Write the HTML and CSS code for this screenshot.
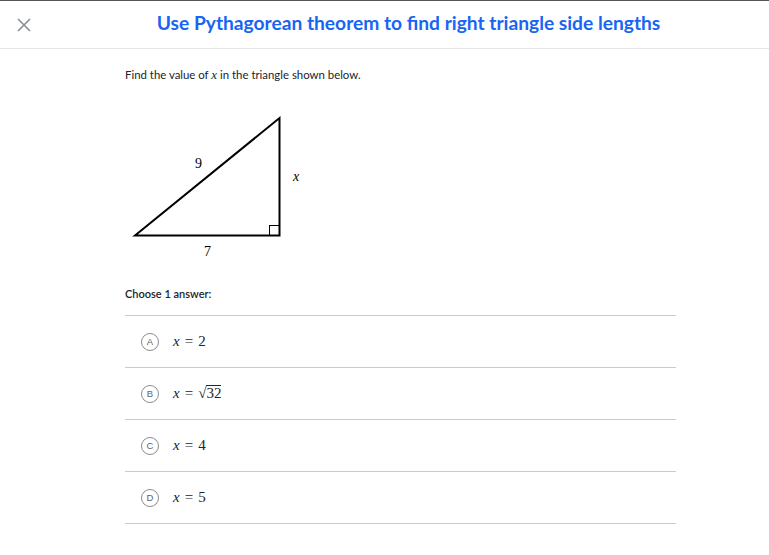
FILE: index.html
```html
<!DOCTYPE html>
<html>
<head>
<meta charset="utf-8">
<link rel="stylesheet" href="styles.css">
</head>
<body>
<div class="page">
  <header class="header">
    <button class="close" aria-label="Close">
      <svg width="14" height="14" viewBox="0 0 14 14"><path d="M1 1 L13 13 M13 1 L1 13" stroke="#888d93" stroke-width="1.6" fill="none"/></svg>
    </button>
    <h1 class="title">Use Pythagorean theorem to find right triangle side lengths</h1>
  </header>
  <main class="content">
    <p class="prompt">Find the value of <span class="mi">x</span> in the triangle shown below.</p>
    <div class="figure">
      <svg width="200" height="160" viewBox="0 0 200 160">
        <polygon points="10,120.5 154.5,3 154.5,120.5" fill="none" stroke="#000" stroke-width="2" stroke-linejoin="miter"/>
        <rect x="144.5" y="110.5" width="10" height="10" fill="none" stroke="#000" stroke-width="1"/>
        <text x="70" y="53" class="lbl">9</text>
        <text x="168" y="66" class="lbl it">x</text>
        <text x="79" y="141" class="lbl">7</text>
      </svg>
    </div>
    <p class="choose">Choose 1 answer:</p>
    <ul class="choices">
      <li class="choice"><span class="letter">A</span><span class="math"><span class="mi">x</span><span class="mo">=</span>2</span></li>
      <li class="choice"><span class="letter">B</span><span class="math"><span class="mi">x</span><span class="mo">=</span><span class="sqrt">√<span class="rad">32</span></span></span></li>
      <li class="choice"><span class="letter">C</span><span class="math"><span class="mi">x</span><span class="mo">=</span>4</span></li>
      <li class="choice"><span class="letter">D</span><span class="math"><span class="mi">x</span><span class="mo">=</span>5</span></li>
    </ul>
  </main>
</div>
</body>
</html>
```

FILE: styles.css
```css
* { box-sizing: border-box; }
html, body { margin: 0; padding: 0; background: #fff; }
body { font-family: Lato, "Liberation Sans", sans-serif; color: #21242c; }
.page { border-top: 1px solid #555; }
.header {
  height: 48px;
  border-bottom: 1px solid #e4e5e6;
  display: flex;
  align-items: center;
}
.close {
  border: 0; background: none; padding: 0;
  margin-left: 17px; width: 14px; height: 14px;
  display: flex; align-items: center; justify-content: center;
  flex: none;
}
.title {
  flex: 1;
  margin: 0 0 0 17px;
  text-align: center;
  font-size: 19.2px;
  font-weight: 700;
  color: #1865f2;
  white-space: nowrap;
  position: relative;
  top: -2px;
}
.content { padding: 0 0 0 125px; width: 676px; }
.prompt { margin: 19px 0 0; font-size: 11.4px; line-height: 14px; }
.mi { font-family: "Liberation Serif", serif; font-style: italic; }
.prompt .mi { font-size: 13px; }
.figure { margin-top: 33px; height: 165px; }
.figure svg { display: block; }
.lbl { font-family: "Liberation Serif", serif; font-size: 14px; fill: #000; }
.lbl.it { font-style: italic; }
.choose { margin: 7px 0 0; font-size: 11px; font-weight: 600; line-height: 14px; }
.choices { list-style: none; margin: 14px 0 0; padding: 0; border-top: 1px solid #c9cacc; }
.choice {
  height: 52px;
  border-bottom: 1px solid #c9cacc;
  display: flex;
  align-items: center;
  padding-left: 16px;
}
.letter {
  width: 18px; height: 18px;
  border: 1px solid #8a8c90;
  border-radius: 50%;
  font-size: 9.5px;
  color: #5f6267;
  display: flex; align-items: center; justify-content: center;
  font-family: "Liberation Sans", sans-serif;
  flex: none;
}
.math {
  margin-left: 14px;
  font-family: "Liberation Serif", serif;
  font-size: 15px;
  color: #21242c;
  display: flex; align-items: baseline;
}
.mo { margin: 0 5px; }
.sqrt { display: inline-flex; align-items: baseline; }
.rad { border-top: 1px solid #21242c; line-height: 14px; }
```
